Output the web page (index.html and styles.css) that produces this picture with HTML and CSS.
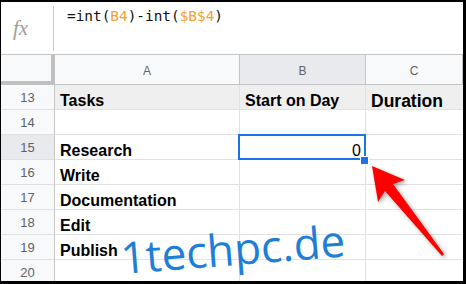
FILE: index.html
```html
<!DOCTYPE html>
<html lang="en">
<head>
  <meta charset="UTF-8">
  <meta name="viewport" content="width=device-width, initial-scale=1.0">
  <title>Sheet - Tasks</title>
  <link rel="stylesheet" href="styles.css">
</head>
<body>
  <div class="sheet">
    <div class="formula-bar">
      <div class="fx">fx</div>
      <div class="formula">=int(<span class="ref">B4</span>)-int(<span class="ref">$B$4</span>)</div>
    </div>

    <div class="grid">
      <div class="corner"></div>
      <div class="col-head">A</div>
      <div class="col-head active">B</div>
      <div class="col-head">C</div>

      <div class="row-head">13</div>
      <div class="cell title">Tasks</div>
      <div class="cell title">Start on Day</div>
      <div class="cell title big">Duration</div>

      <div class="row-head">14</div>
      <div class="cell"></div>
      <div class="cell"></div>
      <div class="cell"></div>

      <div class="row-head active">15</div>
      <div class="cell">Research</div>
      <div class="cell number selected">0<span class="handle"></span></div>
      <div class="cell"></div>

      <div class="row-head">16</div>
      <div class="cell">Write</div>
      <div class="cell"></div>
      <div class="cell"></div>

      <div class="row-head">17</div>
      <div class="cell">Documentation</div>
      <div class="cell"></div>
      <div class="cell"></div>

      <div class="row-head">18</div>
      <div class="cell">Edit</div>
      <div class="cell"></div>
      <div class="cell"></div>

      <div class="row-head">19</div>
      <div class="cell">Publish</div>
      <div class="cell"></div>
      <div class="cell"></div>

      <div class="row-head">20</div>
      <div class="cell"></div>
      <div class="cell"></div>
      <div class="cell"></div>
    </div>

    <div class="watermark">1techpc.de</div>

    <svg class="arrow" width="466" height="284" viewBox="0 0 466 284">
      <polygon points="372,166 405,180 393,184 444,254 442,256 385,191 378,202" fill="#ff0000"/>
    </svg>
  </div>
</body>
</html>
```

FILE: styles.css
```css
body {
  margin: 0;
  background: #fff;
  font-family: "Liberation Sans", Arial, sans-serif;
}
.sheet {
  position: relative;
  width: 466px;
  height: 284px;
  box-sizing: border-box;
  border-style: solid;
  border-color: #000;
  border-width: 2px 3px 3px 1px;
  overflow: hidden;
  background: #fff;
}
.formula-bar {
  display: flex;
  height: 53px;
  box-sizing: border-box;
  border-bottom: 1px solid #c4c4c4;
}
.fx {
  width: 53px;
  height: 45px;
  margin-top: 4px;
  box-sizing: border-box;
  border-right: 1px solid #c8c8c8;
  padding-left: 12px;
  display: flex;
  align-items: center;
  font-family: "Liberation Serif", serif;
  font-style: italic;
  font-size: 21px;
  color: #9e9e9e;
}
.formula {
  padding: 6px 0 0 13px;
  font-family: "DejaVu Sans Mono", monospace;
  font-size: 14.4px;
  line-height: 17px;
  color: #111;
}
.ref {
  color: #f5a033;
}
.grid {
  display: grid;
  grid-template-columns: 54px 185px 126px 97px;
  grid-template-rows: 30px repeat(8, 25px);
}
.corner {
  background: #f8f9fa;
  border-right: 4px solid #c0c0c0;
  border-bottom: 4px solid #c0c0c0;
}
.col-head {
  display: flex;
  align-items: center;
  justify-content: center;
  padding-top: 3px;
  background: #f8f9fa;
  border-right: 1px solid #c4c4c4;
  border-bottom: 1px solid #c4c4c4;
  font-size: 12px;
  color: #5f6368;
}
.col-head.active,
.row-head.active {
  background: #e8eaed;
}
.row-head {
  display: flex;
  align-items: center;
  justify-content: center;
  background: #f8f9fa;
  border-right: 1px solid #c4c4c4;
  border-bottom: 1px solid #e0e0e0;
  font-size: 13px;
  color: #5f6368;
}
.cell {
  position: relative;
  display: flex;
  align-items: flex-end;
  padding: 0 4px 0 5px;
  border-right: 1px solid #e2e2e2;
  border-bottom: 1px solid #e2e2e2;
  font-size: 16px;
  font-weight: bold;
  line-height: 16px;
  color: #000;
  white-space: nowrap;
}
.cell:nth-child(4n) {
  border-right: none;
}
.cell.title {
  background: #efefef;
}
.cell.big {
  font-size: 17.5px;
}
.cell.number {
  justify-content: flex-end;
  font-weight: normal;
}
.cell.selected::after {
  content: "";
  position: absolute;
  left: -2px;
  top: -1px;
  right: -1px;
  bottom: -1px;
  border: 2px solid #1a73e8;
}
.handle {
  position: absolute;
  right: -4px;
  bottom: -6px;
  width: 7px;
  height: 7px;
  background: #1a73e8;
  border: 1px solid #fff;
  z-index: 1;
}
.watermark {
  position: absolute;
  left: 121px;
  top: 233px;
  font-family: "Open Sans", sans-serif;
  font-size: 44px;
  line-height: 44px;
  color: #1f7fd6;
  transform: rotate(-4.5deg);
  transform-origin: 0 39px;
  white-space: nowrap;
}
.arrow {
  position: absolute;
  left: -1px;
  top: -2px;
  filter: drop-shadow(2px 2px 2px rgba(0, 0, 0, 0.35));
}
```
